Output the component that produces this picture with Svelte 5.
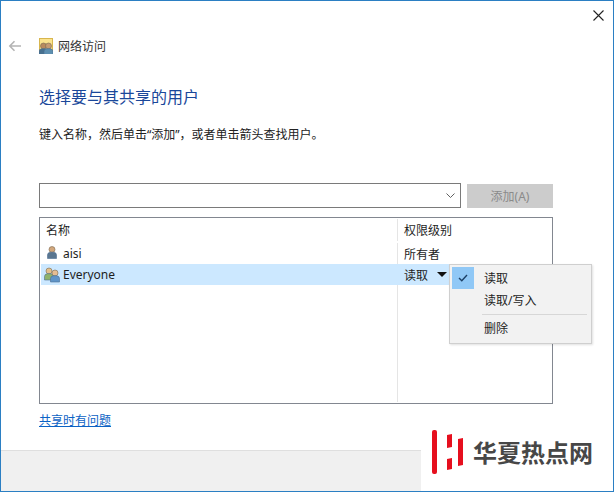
<script lang="ts">
const users = [
	{ name: 'aisi', level: '所有者', group: false },
	{ name: 'Everyone', level: '读取', group: true },
];
</script>

{#snippet person(x: number, y: number, skin: string, body: string)}
	<circle cx={x} cy={y} r="3" fill={skin} stroke="#7a6a50" stroke-width="0.6" />
	<path d="M{x - 4.5} {y + 9}v-3.5q0-2.5 3-2.8h3q3 .3 3 2.8v3.5z" fill={body} stroke="#4d6f93" stroke-width="0.6" />
{/snippet}

<div class="window">
	<main class="content">
		<button class="close" aria-label="关闭">
			<svg width="11" height="11" viewBox="0 0 11 11"><path d="M.5.5l10 10M10.5.5l-10 10" stroke="#222" stroke-width="1.1" /></svg>
		</button>

		<div class="nav">
			<svg class="back" width="14" height="12" viewBox="0 0 14 12">
				<path d="M13 6H2M6.5 1.2L1.8 6l4.7 4.8" fill="none" stroke="#b4b4b4" stroke-width="1.6" />
			</svg>
			<svg class="nav-icon" width="14" height="16" viewBox="0 0 14 16">
				<rect x="0.5" y="0.5" width="13" height="15" fill="#fbe38e" stroke="#d8b64e" />
				{@render person(4.5, 8, '#b98a5e', '#47708f')}
				{@render person(9.5, 8, '#c59a72', '#5d8fb0')}
			</svg>
			<span>网络访问</span>
		</div>

		<h1>选择要与其共享的用户</h1>
		<p class="hint">键入名称，然后单击“添加”，或者单击箭头查找用户。</p>

		<div class="add-row">
			<div class="combo">
				<svg width="9" height="5" viewBox="0 0 9 5"><path d="M.5.5l4 4 4-4" fill="none" stroke="#606060" /></svg>
			</div>
			<div class="add-btn">添加(A)</div>
		</div>

		<div class="list">
			<div class="list-row head">
				<div class="col-name"><span>名称</span></div>
				<div class="col-level"><span>权限级别</span></div>
			</div>
			{#each users as user}
				<div class="list-row" class:selected={user.group}>
					<div class="col-name">
						<svg class="user-icon" width="18" height="16" viewBox="0 0 18 16">
							{#if user.group}
								{@render person(6, 4, '#e2c08c', '#8fb36b')}
								{@render person(12, 6, '#e6bd92', '#5f94c8')}
							{:else}
								{@render person(9, 3.5, '#d2a77c', '#5a7690')}
							{/if}
						</svg>
						<span>{user.name}</span>
					</div>
					<div class="col-level">
						<span>{user.level}</span>
						{#if user.group}<i class="caret"></i>{/if}
					</div>
				</div>
			{/each}
			<div class="list-fill">
				<div class="col-name"></div>
				<div class="col-level"></div>
			</div>

			<div class="menu">
				<div class="menu-item">
					<div class="check">
						<svg width="10" height="8" viewBox="0 0 10 8"><path d="M1 4l2.8 2.8L9 1" fill="none" stroke="#1b3f66" stroke-width="1.4" /></svg>
					</div>
					<span>读取</span>
				</div>
				<div class="menu-item"><div class="gutter"></div><span>读取/写入</span></div>
				<div class="menu-sep"></div>
				<div class="menu-item"><div class="gutter"></div><span>删除</span></div>
			</div>
		</div>

		<a class="help" href="#help">共享时有问题</a>
	</main>
	<footer class="footer"></footer>

	<div class="watermark">
		<svg width="32" height="44" viewBox="0 0 32 44">
			<rect x="0" y="0" width="5" height="44" rx="2" fill="#e60f1e" />
			<path d="M15 5l5-1v13l-5 1zM15 29l5-1v11l-5 1z" fill="#e60f1e" />
			<path d="M26 9l5-1v27l-5 1z" fill="#e60f1e" />
		</svg>
		<span>华夏热点网</span>
	</div>
</div>

<style>
	:global(body) {
		margin: 0;
		font-family: "Noto Sans", "Noto Sans CJK SC", sans-serif;
		font-size: 12px;
		color: #1e1e1e;
	}

	.window {
		position: relative;
		width: 614px;
		height: 492px;
		box-sizing: border-box;
		display: flex;
		flex-direction: column;
		border: 1px solid #2b7fc3;
		overflow: hidden;
		background: #fff;
	}

	.content {
		position: relative;
		flex: 1;
		padding: 0 60px 0 38px;
	}

	.close {
		position: absolute;
		top: 9px;
		right: 9px;
		padding: 0;
		border: 0;
		background: none;
		display: flex;
	}

	.nav {
		display: flex;
		align-items: center;
		height: 20px;
		margin-top: 35px;
		font-size: 12px;
		color: #333;
	}

	.back {
		margin-left: -31px;
		margin-right: 17px;
	}

	.nav-icon {
		margin-right: 5px;
	}

	h1 {
		margin: 29px 0 0;
		font-size: 16px;
		line-height: 24px;
		font-weight: 400;
		color: #1a479a;
	}

	.hint {
		margin: 17px 0 0;
		line-height: 18px;
		color: #222;
	}

	.add-row {
		display: flex;
		gap: 6px;
		margin-top: 39px;
	}

	.combo {
		width: 422px;
		height: 25px;
		box-sizing: border-box;
		border: 1px solid #7a7a7a;
		display: flex;
		align-items: center;
		justify-content: flex-end;
		padding-right: 5px;
	}

	.add-btn {
		width: 86px;
		height: 24px;
		margin-top: 1px;
		background: #cccccc;
		color: #8a8a8a;
		display: flex;
		align-items: center;
		justify-content: center;
	}

	.list {
		position: relative;
		width: 514px;
		height: 187px;
		box-sizing: border-box;
		margin-top: 9px;
		border: 1px solid #828790;
		padding: 1px;
		display: flex;
		flex-direction: column;
	}

	.list-row {
		display: flex;
		height: 21px;
		align-items: center;
	}

	.list-row.head {
		height: 22px;
		margin-bottom: 2px;
	}

	.list-row.selected {
		background: #cce8ff;
	}

	.col-name {
		width: 356px;
		display: flex;
		align-items: center;
		padding-left: 5px;
		box-sizing: border-box;
	}

	.col-level {
		flex: 1;
		display: flex;
		align-items: center;
		align-self: stretch;
		padding-left: 6px;
		border-left: 1px solid #e5e5e5;
	}

	.list-row.selected .col-level {
		border-left-color: #cce8ff;
	}

	.user-icon {
		margin: 0 2px 0 -3px;
	}

	.list-fill {
		flex: 1;
		display: flex;
	}

	.caret {
		width: 0;
		height: 0;
		margin-left: 9px;
		border-left: 5px solid transparent;
		border-right: 5px solid transparent;
		border-top: 5px solid #111;
	}

	.menu {
		position: absolute;
		top: 46px;
		left: 409px;
		width: 143px;
		height: 80px;
		box-sizing: border-box;
		padding: 2px;
		background: #f2f2f2;
		border: 1px solid #cfcfcf;
		box-shadow: 1px 1px 2px rgba(0, 0, 0, 0.12);
	}

	.menu-item {
		display: flex;
		align-items: center;
		height: 22px;
	}

	.check,
	.gutter {
		width: 22px;
		height: 22px;
		margin-right: 10px;
		flex: none;
	}

	.check {
		background: #90c8f6;
		display: flex;
		align-items: center;
		justify-content: center;
	}

	.menu-sep {
		height: 1px;
		margin: 3px 2px 2px 30px;
		background: #d7d7d7;
	}

	.help {
		display: block;
		width: fit-content;
		margin-top: 8px;
		line-height: 17px;
		color: #0b62c4;
	}

	.footer {
		height: 40px;
		flex: none;
		background: #f0f0f0;
		border-top: 1px solid #dfdfdf;
	}

	.watermark {
		position: absolute;
		right: -1px;
		bottom: -1px;
		width: 182px;
		height: 61px;
		padding: 0 0 10px 11px;
		display: flex;
		align-items: center;
		background: #fff;
	}

	.watermark svg {
		flex: none;
	}

	.watermark span {
		margin-left: 9px;
		font-family: "Noto Sans CJK SC", sans-serif;
		font-size: 24px;
		line-height: 1;
		font-weight: 700;
		color: #474747;
	}
</style>
